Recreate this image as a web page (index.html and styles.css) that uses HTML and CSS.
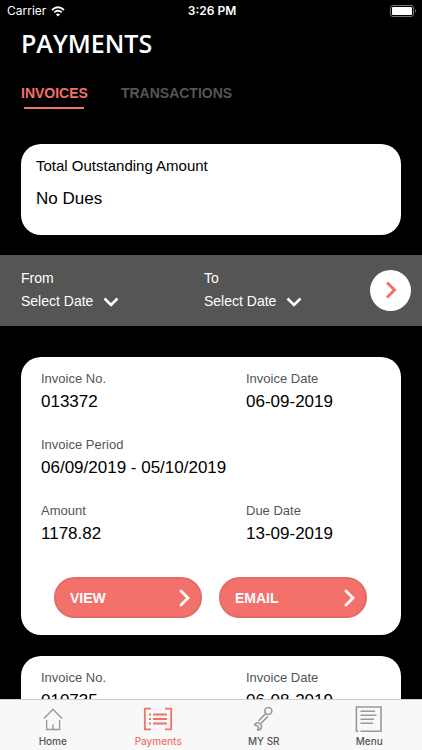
FILE: index.html
```html
<!DOCTYPE html>
<html lang="en">
<head>
<meta charset="utf-8">
<meta name="viewport" content="width=device-width, initial-scale=1">
<title>Payments</title>
<link rel="stylesheet" href="styles.css">
</head>
<body>
<div class="app">
  <header class="status">
    <div class="carrier">
      <span>Carrier</span>
      <svg width="14" height="11" viewBox="0 0 14 11" aria-hidden="true">
        <path d="M1 4Q7 -1.4 13 4M3.2 6.4Q7 3 10.8 6.4" fill="none" stroke="#fff" stroke-width="1.9"/>
        <path d="M4.8 8.3Q7 6.5 9.2 8.3L7 10.6Z" fill="#fff"/>
      </svg>
    </div>
    <time class="clock">3:26 PM</time>
    <svg class="battery" width="27" height="12" viewBox="0 0 27 12" aria-hidden="true">
      <rect x=".5" y=".5" width="23" height="11" rx="2.5" fill="none" stroke="#777"/>
      <rect x="2" y="2" width="20" height="8" rx="1" fill="#fff"/>
      <path d="M25 4Q27 6 25 8Z" fill="#777"/>
    </svg>
  </header>

  <main class="content">
    <h1 class="title">PAYMENTS</h1>
    <nav class="tabs" aria-label="Sections">
      <a class="tab tab-active" href="#invoices" aria-current="page">INVOICES</a>
      <a class="tab" href="#transactions">TRANSACTIONS</a>
    </nav>

    <section class="card summary">
      <h2 class="summary-label">Total Outstanding Amount</h2>
      <p class="summary-value">No Dues</p>
    </section>

    <form class="filter">
      <div class="filter-field">
        <label for="from">From</label>
        <div class="picker">
          <select id="from"><option>Select Date</option></select>
          <svg width="16" height="10" viewBox="0 0 16 10" aria-hidden="true"><path d="M1.5 1.5L8 8L14.5 1.5"/></svg>
        </div>
      </div>
      <div class="filter-field">
        <label for="to">To</label>
        <div class="picker">
          <select id="to"><option>Select Date</option></select>
          <svg width="16" height="10" viewBox="0 0 16 10" aria-hidden="true"><path d="M1.5 1.5L8 8L14.5 1.5"/></svg>
        </div>
      </div>
      <button class="go" type="button" aria-label="Apply">
        <svg width="12" height="18" viewBox="0 0 12 18" aria-hidden="true"><path d="M2 1.5L9.5 9L2 16.5"/></svg>
      </button>
    </form>

    <article class="card invoice">
      <dl class="details">
        <div><dt>Invoice No.</dt><dd>013372</dd></div>
        <div><dt>Invoice Date</dt><dd>06-09-2019</dd></div>
        <div class="wide"><dt>Invoice Period</dt><dd>06/09/2019 - 05/10/2019</dd></div>
        <div><dt>Amount</dt><dd>1178.82</dd></div>
        <div><dt>Due Date</dt><dd>13-09-2019</dd></div>
      </dl>
      <div class="actions">
        <button class="pill" type="button">VIEW
          <svg width="12" height="18" viewBox="0 0 12 18" aria-hidden="true"><path d="M2 2L9 9L2 16"/></svg>
        </button>
        <button class="pill" type="button">EMAIL
          <svg width="12" height="18" viewBox="0 0 12 18" aria-hidden="true"><path d="M2 2L9 9L2 16"/></svg>
        </button>
      </div>
    </article>

    <article class="card invoice">
      <dl class="details">
        <div><dt>Invoice No.</dt><dd>010735</dd></div>
        <div><dt>Invoice Date</dt><dd>06-08-2019</dd></div>
      </dl>
    </article>
  </main>

  <nav class="tabbar" aria-label="Main">
    <a class="item" href="#home">
      <svg width="30" height="28" viewBox="0 0 30 28" aria-hidden="true">
        <path d="M6 13.5L15 4.2L24 13.5M8.6 15V24.5H21.6V15M15 24.5V19.5" stroke-width="1.4"/>
      </svg>
      <span>Home</span>
    </a>
    <a class="item item-active" href="#payments" aria-current="page">
      <svg width="30" height="28" viewBox="0 0 30 28" aria-hidden="true">
        <path d="M8 3.7H1.8V24.3H8M22 3.7H28.2V24.3H22" stroke-width="1.8"/>
        <path d="M10 9.5H24M10 14H24M10 18.5H24" stroke-width="1.8"/>
        <path d="M6 9.5H8M6 14H8M6 18.5H8" stroke-width="1.8"/>
      </svg>
      <span>Payments</span>
    </a>
    <a class="item" href="#sr">
      <svg width="30" height="28" viewBox="0 0 30 28" aria-hidden="true">
        <circle cx="19.3" cy="6" r="3.5" stroke-width="1.6"/>
        <path d="M9.4 16L16.6 8.6M12.2 18.2L18.8 11.4" stroke-width="1.6"/>
        <path d="M5.4 20.2A3.7 3.7 0 1 1 9.2 25.2L8.6 24.6L9.8 22.8L8.4 20.8L5.4 20.2" stroke-width="1.5"/>
      </svg>
      <span>MY SR</span>
    </a>
    <a class="item" href="#menu">
      <svg width="30" height="28" viewBox="0 0 30 28" aria-hidden="true">
        <path d="M6.5 26.2H27V2H2.4V26.2H4.4" stroke-width="1.6"/>
        <path d="M6.5 6.2H21M6.5 10.3H22.5M6.5 14.3H20M6.5 18.3H19" stroke-width="1.6"/>
      </svg>
      <span>Menu</span>
    </a>
  </nav>
</div>
</body>
</html>
```
FILE: styles.css
```css
* { box-sizing: border-box; }

body {
  margin: 0;
  background: #000;
  color: #000;
  font-family: "Liberation Sans", Arial, sans-serif;
}

h1, h2, p, dl, dd { margin: 0; font-weight: 400; }
a { text-decoration: none; }
button, select { font: inherit; color: inherit; border: 0; padding: 0; cursor: pointer; }
svg { display: block; flex: none; }

.app {
  display: flex;
  flex-direction: column;
  height: 100vh;
}

/* Status bar */
.status {
  display: grid;
  grid-template-columns: 1fr auto 1fr;
  align-items: center;
  padding: 1px 5px 0 7px;
  color: #fff;
  font: 12px/20px Inter, sans-serif;
}
.carrier { display: flex; align-items: center; gap: 5px; }
.clock { font-weight: 600; }
.battery { justify-self: end; }

/* Scrolling area */
.content {
  flex: 1;
  min-height: 0;
  overflow-y: auto;
  scrollbar-width: none;
}

.title {
  padding: 6px 21px 0;
  color: #fff;
  font: 600 25px/32px "Open Sans", sans-serif;
}

.tabs {
  display: flex;
  gap: 33px;
  padding: 24px 21px 0;
}
.tab {
  display: grid;
  gap: 4px;
  color: #555;
  font-size: 14px;
  line-height: 20px;
  font-weight: 700;
}
.tab-active { color: #f3716b; }
.tab-active::after {
  content: "";
  height: 2px;
  margin: 0 4px 0 3px;
  background: #f3716b;
}

.card {
  margin: 0 21px;
  border-radius: 20px;
  background: #fff;
}

.summary { margin-top: 35px; padding: 12px 15px 25px; }
.summary-label { font-size: 15px; line-height: 20px; }
.summary-value { margin-top: 12px; font-size: 17px; line-height: 22px; }

/* Date filter */
.filter {
  display: grid;
  grid-template-columns: 183fr 166fr auto;
  align-items: center;
  margin: 20px 0 31px;
  padding: 12px 11px 13px 21px;
  background: #555;
  color: #fff;
  font-size: 14px;
  line-height: 23px;
}
.filter-field { display: grid; justify-items: start; }
.picker { display: grid; align-items: center; }
.picker select {
  grid-area: 1 / 1;
  appearance: none;
  background: transparent;
  padding-right: 25px;
  line-height: 23px;
}
.picker option { color: #000; }
.picker svg {
  grid-area: 1 / 1;
  justify-self: end;
  pointer-events: none;
}
.picker path { fill: none; stroke: #fff; stroke-width: 2.6; }

.go {
  display: grid;
  place-items: center;
  width: 41px;
  height: 41px;
  border-radius: 50%;
  background: #fff;
}
.go path { fill: none; stroke: #f3716b; stroke-width: 3; }

/* Invoices */
.invoice { margin-bottom: 21px; padding: 11px 20px 17px; }
.details {
  display: grid;
  grid-template-columns: 205fr 135fr;
  row-gap: 20px;
}
.wide { grid-column: 1 / -1; }
dt { color: #555; font-size: 13px; line-height: 22px; }
dd { font-size: 17px; line-height: 24px; }

.actions {
  display: flex;
  gap: 17px;
  margin: 31px 14px 0 13px;
}
.pill {
  flex: 1;
  display: flex;
  align-items: center;
  justify-content: space-between;
  height: 41px;
  padding: 0 9px 0 14px;
  border: 2px solid #e26b67;
  border-radius: 21px;
  background: #f3716b;
  color: #fff;
  font-size: 14px;
  font-weight: 700;
}
.pill path { fill: none; stroke: #fff; stroke-width: 2.8; stroke-linecap: round; }

/* Bottom navigation */
.tabbar {
  display: grid;
  grid-template-columns: repeat(4, 1fr);
  padding-top: 5px;
  border-top: 1px solid #ccc;
  background: #f8f8f8;
}
.item {
  display: grid;
  justify-items: center;
  color: #555;
  font: 500 10px/17px Inter, sans-serif;
}
.item svg { fill: none; stroke: #999; }
.item-active { color: #f3716b; }
.item-active svg { stroke: #f3716b; }
```
